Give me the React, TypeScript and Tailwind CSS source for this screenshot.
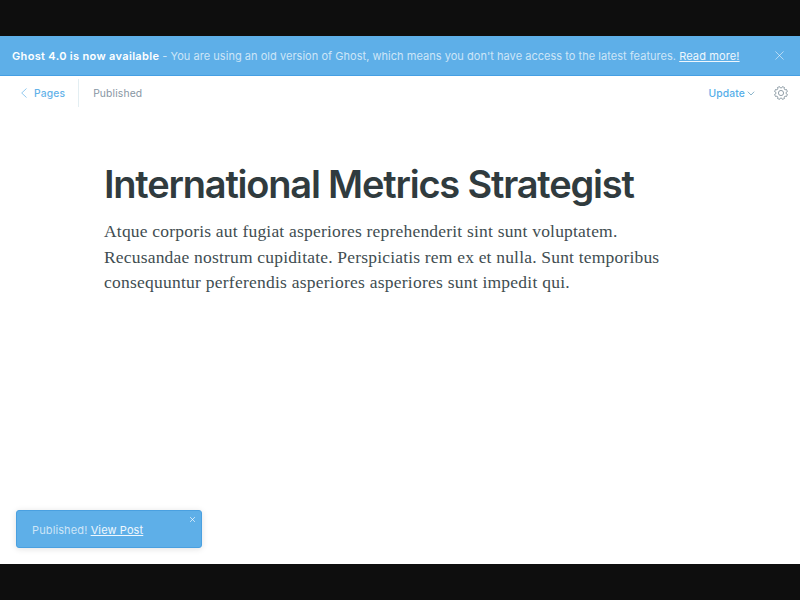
import React from "react";

const bodyLines = [
  { text: "Atque corporis aut fugiat asperiores reprehenderit sint sunt voluptatem.", tracking: "tracking-[0.2px]" },
  { text: "Recusandae nostrum cupiditate. Perspiciatis rem ex et nulla. Sunt temporibus", tracking: "tracking-[0.19px]" },
  { text: "consequuntur perferendis asperiores asperiores sunt impedit qui.", tracking: "tracking-[0.24px]" },
];

function Cross({ className }: { className: string }) {
  return (
    <svg viewBox="0 0 10 10" fill="none" stroke="currentColor" strokeLinecap="round" className={className}>
      <path d="M.8.8l8.4 8.4M9.2.8L.8 9.2" />
    </svg>
  );
}

// Eight-toothed cog outline, drawn tooth by tooth around the hub.
function Gear() {
  const points: string[] = [];
  for (let i = 0; i < 8; i++) {
    const base = i * 45 - 67.5;
    for (const [offset, radius] of [[-15, 8.8], [-10, 11.2], [10, 11.2], [15, 8.8]]) {
      const angle = ((base + offset) * Math.PI) / 180;
      points.push(`${(12 + radius * Math.cos(angle)).toFixed(2)},${(12 + radius * Math.sin(angle)).toFixed(2)}`);
    }
  }
  return (
    <svg viewBox="0 0 24 24" fill="none" stroke="#84929d" strokeWidth="1.5" strokeLinejoin="round" className="h-[14px] w-[14px]">
      <circle cx="12" cy="12" r="4.4" />
      <polygon points={points.join(" ")} />
    </svg>
  );
}

export default function App() {
  return (
    <div className="flex h-[600px] w-[800px] flex-col overflow-hidden bg-[#0e0e0e] py-9 font-['Inter',sans-serif]">
      <div className="flex min-h-0 flex-1 flex-col bg-white">
        <header className="flex h-10 shrink-0 items-center justify-between border-b border-[#459fe3] bg-[#5eafe8] pr-[16px] pl-3 text-white">
          <p className="whitespace-nowrap text-[11px] leading-4 tracking-[0.035px] text-white/70">
            <b className="font-semibold tracking-[0.33px] text-white">Ghost 4.0 is now available</b> - You are using an old version of Ghost, which means you don't have access to the latest features.{" "}
            <a className="tracking-[0.12px] text-white/90 underline">Read more!</a>
          </p>
          <Cross className="-mt-[1px] h-[9px] w-[9px] text-white/60" />
        </header>

        <nav className="flex h-[34px] shrink-0 items-center pr-[12px] pl-[21px] text-[10.3px] leading-4 tracking-[0.15px]">
          <a className="flex items-center font-medium text-[#63b2e9]">
            <svg viewBox="0 0 6 10" fill="none" stroke="currentColor" strokeWidth="0.7" className="mr-[7px] h-[10px] w-[6px]">
              <path d="M5.5.5L.7 5l4.8 4.5" />
            </svg>
            Pages
          </a>
          <span className="ml-[13px] h-7 w-px bg-[#e3eef2]" />
          <span className="ml-[14px] text-[#8796a3]">Published</span>
          <a className="ml-auto flex items-center font-medium text-[#55aee9]">
            Update
            <svg viewBox="0 0 8 5" fill="none" stroke="#8bb4cb" className="ml-[2px] h-[5px] w-[8px]">
              <path d="M.8.7L4 4 7.2.7" />
            </svg>
          </a>
          <span className="ml-[19px]"><Gear /></span>
        </nav>

        <main className="flex flex-1 flex-col pt-[49px] pl-[104px]">
          <h1 className="whitespace-nowrap text-[38px] leading-[50px] font-semibold tracking-[-1.2px] text-[#303b3e]">
            International Metrics Strategist
          </h1>
          <div className="mt-[10px] font-['Georgia','Liberation_Serif',serif] text-[17.5px] leading-[25.6px] text-[#414d51]">
            {bodyLines.map((line) => (
              <p key={line.text} className="whitespace-nowrap"><span className={line.tracking}>{line.text}</span></p>
            ))}
          </div>
        </main>

        <aside className="mb-4 ml-4 flex h-[38px] w-[186px] shrink-0 justify-between rounded-[3px] border border-[#4aa0e0] bg-[#5eafe8] pr-[6px] pl-[15px] text-white shadow-[0_1px_6px_rgba(0,0,0,0.12)]">
          <p className="mt-[2px] self-center whitespace-nowrap text-[11px] leading-4 tracking-[0.12px] text-white/70">
            Published! <a className="text-white/90 underline">View Post</a>
          </p>
          <Cross className="mt-[6px] h-[5px] w-[5px] text-white/90 [stroke-width:1.5]" />
        </aside>
      </div>
    </div>
  );
}
